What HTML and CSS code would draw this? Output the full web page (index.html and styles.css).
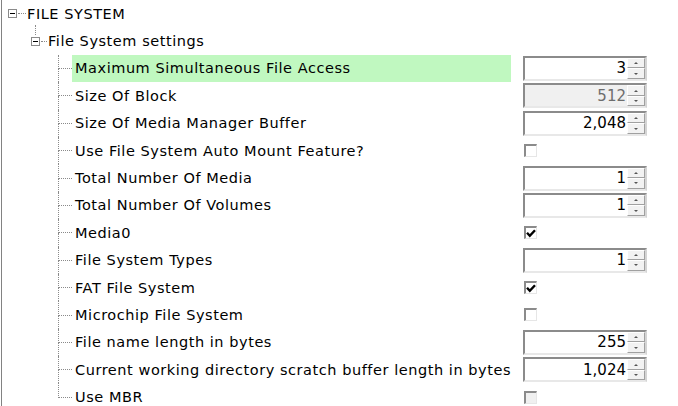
FILE: index.html
```html
<!DOCTYPE html>
<html>
<head>
<meta charset="utf-8">
<link rel="stylesheet" href="styles.css">
</head>
<body>
<div class="tree">
  <div class="row lvl1">
    <span class="expander"><span class="minus"></span></span>
    <span class="hdash"></span>
    <span class="text">FILE SYSTEM</span>
  </div>
  <div class="row lvl2">
    <span class="vlink"></span>
    <span class="expander"><span class="minus"></span></span>
    <span class="hdash"></span>
    <span class="text">File System settings</span>
  </div>
  <div class="children">
    <div class="row item">
      <span class="conn"><span class="top"></span><span class="bot"></span></span>
      <span class="label selected">Maximum Simultaneous File Access</span>
      <span class="value"><span class="spin"><span class="num">3</span><span class="btns"><span class="up"></span><span class="down"></span></span></span></span>
    </div>
    <div class="row item">
      <span class="conn"><span class="top"></span><span class="bot"></span></span>
      <span class="label">Size Of Block</span>
      <span class="value"><span class="spin disabled"><span class="num">512</span><span class="btns"><span class="up"></span><span class="down"></span></span></span></span>
    </div>
    <div class="row item">
      <span class="conn"><span class="top"></span><span class="bot"></span></span>
      <span class="label">Size Of Media Manager Buffer</span>
      <span class="value"><span class="spin"><span class="num">2,048</span><span class="btns"><span class="up"></span><span class="down"></span></span></span></span>
    </div>
    <div class="row item">
      <span class="conn"><span class="top"></span><span class="bot"></span></span>
      <span class="label">Use File System Auto Mount Feature?</span>
      <span class="value"><span class="check"></span></span>
    </div>
    <div class="row item">
      <span class="conn"><span class="top"></span><span class="bot"></span></span>
      <span class="label">Total Number Of Media</span>
      <span class="value"><span class="spin"><span class="num">1</span><span class="btns"><span class="up"></span><span class="down"></span></span></span></span>
    </div>
    <div class="row item">
      <span class="conn"><span class="top"></span><span class="bot"></span></span>
      <span class="label">Total Number Of Volumes</span>
      <span class="value"><span class="spin"><span class="num">1</span><span class="btns"><span class="up"></span><span class="down"></span></span></span></span>
    </div>
    <div class="row item">
      <span class="conn"><span class="top"></span><span class="bot"></span></span>
      <span class="label">Media0</span>
      <span class="value"><span class="check checked"><svg viewBox="0 0 10 10" width="10" height="10"><path d="M1 4.8 L3.8 7.8 L9 2.2" fill="none" stroke="#000" stroke-width="2.4"/></svg></span></span>
    </div>
    <div class="row item">
      <span class="conn"><span class="top"></span><span class="bot"></span></span>
      <span class="label">File System Types</span>
      <span class="value"><span class="spin"><span class="num">1</span><span class="btns"><span class="up"></span><span class="down"></span></span></span></span>
    </div>
    <div class="row item">
      <span class="conn"><span class="top"></span><span class="bot"></span></span>
      <span class="label">FAT File System</span>
      <span class="value"><span class="check checked"><svg viewBox="0 0 10 10" width="10" height="10"><path d="M1 4.8 L3.8 7.8 L9 2.2" fill="none" stroke="#000" stroke-width="2.4"/></svg></span></span>
    </div>
    <div class="row item">
      <span class="conn"><span class="top"></span><span class="bot"></span></span>
      <span class="label">Microchip File System</span>
      <span class="value"><span class="check"></span></span>
    </div>
    <div class="row item">
      <span class="conn"><span class="top"></span><span class="bot"></span></span>
      <span class="label">File name length in bytes</span>
      <span class="value"><span class="spin"><span class="num">255</span><span class="btns"><span class="up"></span><span class="down"></span></span></span></span>
    </div>
    <div class="row item">
      <span class="conn"><span class="top"></span><span class="bot"></span></span>
      <span class="label">Current working directory scratch buffer length in bytes</span>
      <span class="value"><span class="spin"><span class="num">1,024</span><span class="btns"><span class="up"></span><span class="down"></span></span></span></span>
    </div>
    <div class="row item last">
      <span class="conn"><span class="top"></span><span class="bot"></span></span>
      <span class="label">Use MBR</span>
      <span class="value"><span class="check disabled"></span></span>
    </div>
  </div>
</div>
</body>
</html>
```
FILE: styles.css
```css
html, body {
  margin: 0;
  padding: 0;
  background: #fff;
  overflow: hidden;
}
body {
  font-family: "DejaVu Sans", Verdana, sans-serif;
  font-size: 14.5px;
  color: #000;
}
.tree {
  margin-left: 1px;
  border-left: 1px solid #828282;
  height: 406px;
}
.row {
  height: 27.4px;
  display: flex;
  align-items: center;
  white-space: nowrap;
}
.text, .label {
  letter-spacing: 0.55px;
}
.expander {
  width: 9px;
  height: 9px;
  box-sizing: border-box;
  border: 1px solid #8a8a8a;
  display: flex;
  align-items: center;
  justify-content: center;
  background: #fff;
}
.minus {
  width: 5px;
  height: 1px;
  background: #000;
}
.hdash {
  width: 8px;
  border-top: 1px dotted #8a8a8a;
  margin: 0 1px 0 1px;
}
.lvl1 { padding-left: 6px; }
.lvl2 { padding-left: 29px; position: relative; }
.lvl2 .hdash { width: 6px; }
.vlink {
  position: absolute;
  left: 33px;
  top: -2px;
  height: 10px;
  border-left: 1px dotted #8a8a8a;
}
.children { padding-left: 56px; }
.item { align-items: stretch; }
.conn {
  width: 14px;
  display: flex;
  flex-direction: column;
}
.conn .top {
  flex: 1;
  border-left: 1px dotted #8a8a8a;
  border-bottom: 1px dotted #8a8a8a;
}
.conn .bot {
  flex: 1;
  border-left: 1px dotted #8a8a8a;
}
.item.last .conn .bot { border-left-color: transparent; }
.label {
  width: 436px;
  padding-left: 3px;
  display: flex;
  align-items: center;
}
.label.selected { background: #c0f8c0; }
.value {
  margin-left: 12px;
  display: flex;
  align-items: center;
}
.spin {
  width: 124px;
  height: 25px;
  box-sizing: border-box;
  border-top: 2px solid #8b8b8b;
  border-left: 2px solid #8b8b8b;
  border-right: 2px solid #d4d4d4;
  border-bottom: 2px solid #e8e8e8;
  background: #fff;
  display: flex;
  align-items: stretch;
}
.spin.disabled { background: #f0f0f0; color: #6d6d6d; }
.num {
  flex: 1;
  text-align: right;
  padding-right: 1px;
  display: flex;
  align-items: center;
  justify-content: flex-end;
  font-size: 15px;
}
.btns {
  width: 18px;
  display: flex;
  flex-direction: column;
}
.up, .down {
  flex: 1;
  box-sizing: border-box;
  background: #f2f2f2;
  border-top: 1px solid #fff;
  border-left: 1px solid #fff;
  border-right: 1px solid #a0a0a0;
  border-bottom: 1px solid #a0a0a0;
  display: flex;
  align-items: center;
  justify-content: center;
}
.up::after {
  content: "";
  border-left: 2px solid transparent;
  border-right: 2px solid transparent;
  border-bottom: 2px solid #555;
}
.down::after {
  content: "";
  border-left: 2px solid transparent;
  border-right: 2px solid transparent;
  border-top: 2px solid #555;
}
.check {
  width: 13px;
  height: 13px;
  box-sizing: border-box;
  margin-left: 1px;
  border-top: 2px solid #8b8b8b;
  border-left: 2px solid #8b8b8b;
  border-right: 1px solid #e6e6e6;
  border-bottom: 1px solid #e6e6e6;
  background: #fff;
  display: flex;
  align-items: center;
  justify-content: center;
}
.check svg { display: block; }
.check.disabled { background: #f0f0f0; }
```
